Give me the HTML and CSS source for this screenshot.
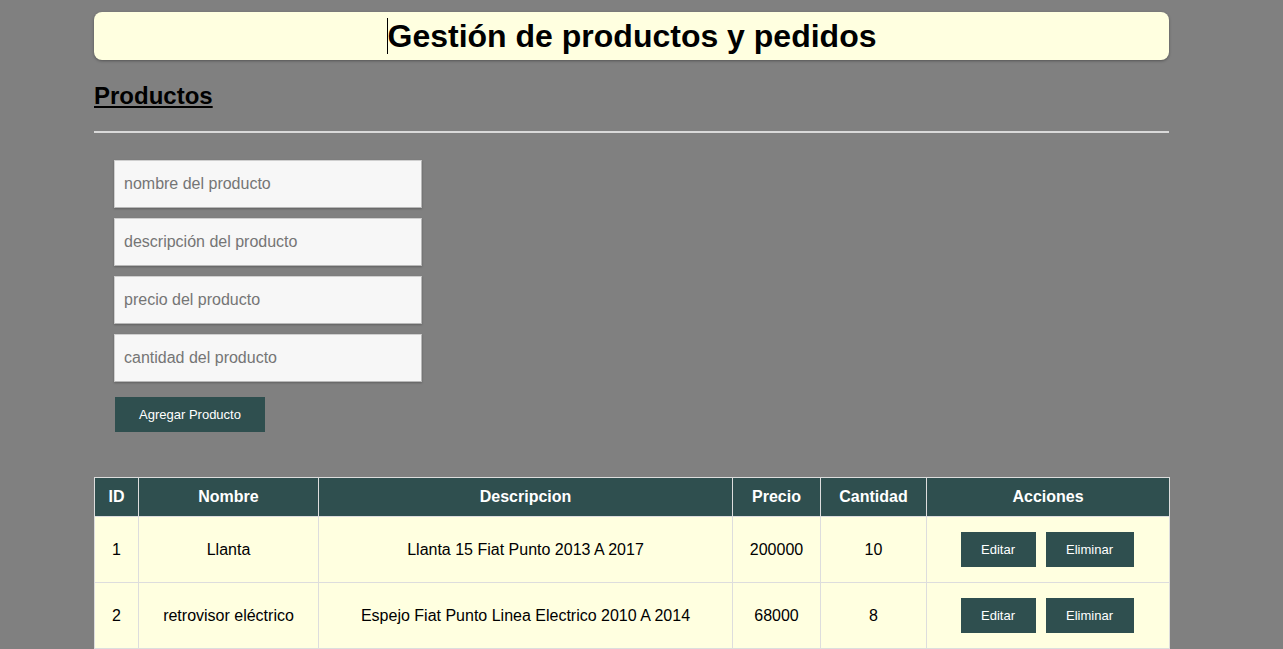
FILE: index.html
```html
<!DOCTYPE html>
<html lang="es">
<head>
<meta charset="utf-8">
<title>Gestión de productos y pedidos</title>
<link rel="stylesheet" href="styles.css">
</head>
<body>
<div class="page">
  <header class="banner">
    <h1 class="title"><span class="caret"></span>Gestión de productos y pedidos</h1>
  </header>
  <h2 class="section-title">Productos</h2>
  <hr class="divider">
  <form class="product-form">
    <input class="field" type="text" placeholder="nombre del producto">
    <input class="field" type="text" placeholder="descripción del producto">
    <input class="field" type="text" placeholder="precio del producto">
    <input class="field" type="text" placeholder="cantidad del producto">
    <button class="btn btn-add" type="button">Agregar Producto</button>
  </form>
  <table class="products">
    <colgroup>
      <col class="c-id"><col class="c-name"><col class="c-desc"><col class="c-price"><col class="c-qty"><col class="c-act">
    </colgroup>
    <thead>
      <tr><th>ID</th><th>Nombre</th><th>Descripcion</th><th>Precio</th><th>Cantidad</th><th>Acciones</th></tr>
    </thead>
    <tbody>
      <tr>
        <td>1</td><td>Llanta</td><td>Llanta 15 Fiat Punto 2013 A 2017</td><td>200000</td><td>10</td>
        <td><div class="actions"><button class="btn btn-edit" type="button">Editar</button><button class="btn btn-del" type="button">Eliminar</button></div></td>
      </tr>
      <tr>
        <td>2</td><td>retrovisor eléctrico</td><td>Espejo Fiat Punto Linea Electrico 2010 A 2014</td><td>68000</td><td>8</td>
        <td><div class="actions"><button class="btn btn-edit" type="button">Editar</button><button class="btn btn-del" type="button">Eliminar</button></div></td>
      </tr>
    </tbody>
  </table>
</div>
</body>
</html>
```
FILE: styles.css
```css
html, body {
  margin: 0;
  padding: 0;
  background: #808080;
  font-family: "Liberation Sans", Arial, sans-serif;
  color: #000;
}
.page {
  width: 1075px;
  margin-left: 94px;
  padding-top: 12px;
}
.banner {
  background: #ffffe0;
  border-radius: 8px;
  box-shadow: 0 1px 3px rgba(0,0,0,0.35);
  height: 48px;
  display: flex;
  align-items: center;
  justify-content: center;
}
.title {
  margin: 0;
  font-size: 32px;
  font-weight: bold;
  line-height: 37px;
  display: flex;
  align-items: center;
}
.caret {
  display: inline-block;
  width: 0;
  height: 36px;
  border-left: 1px solid #000;
}
.section-title {
  margin: 22px 0 0 0;
  font-size: 24px;
  line-height: 28px;
  text-decoration: underline;
  height: 28px;
}
.divider {
  margin: 21px 0 0 0;
  border: none;
  border-top: 2px solid #d9d9d9;
  height: 0;
}
.product-form {
  padding: 27px 0 0 20px;
  display: flex;
  flex-direction: column;
  align-items: flex-start;
}
.field {
  box-sizing: border-box;
  width: 308px;
  height: 48px;
  margin: 0 0 10px 0;
  padding: 0 9px;
  border: 1px solid #cfcfcf;
  border-bottom-color: #b8b8b8;
  border-right-color: #b8b8b8;
  box-shadow: 0 1px 2px rgba(0,0,0,0.25);
  background: #f7f7f7;
  font-family: "Liberation Sans", Arial, sans-serif;
  font-size: 16px;
  color: #333;
  outline: none;
}
.field::placeholder {
  color: #757575;
}
.btn {
  border: none;
  background: #2f4f4f;
  color: #fff;
  font-family: "Liberation Sans", Arial, sans-serif;
  font-size: 13px;
  height: 35px;
  padding: 0;
  cursor: pointer;
}
.btn-add {
  width: 150px;
  margin: 5px 0 0 1px;
}
.products {
  margin-top: 45px;
  width: 1075px;
  border-collapse: collapse;
  table-layout: fixed;
}
.c-id { width: 44px; }
.c-name { width: 180px; }
.c-desc { width: 414px; }
.c-price { width: 88px; }
.c-qty { width: 106px; }
.c-act { width: 243px; }
.products th,
.products td {
  border: 1px solid #dddddd;
  text-align: center;
  font-size: 16px;
  padding: 0;
}
.products th {
  background: #2f4f4f;
  color: #fff;
  font-weight: bold;
  height: 38px;
}
.products td {
  background: #ffffe0;
  height: 65px;
}
.actions {
  display: flex;
  justify-content: center;
  gap: 10px;
  padding-right: 2px;
}
.btn-edit { width: 75px; }
.btn-del { width: 88px; }
```
